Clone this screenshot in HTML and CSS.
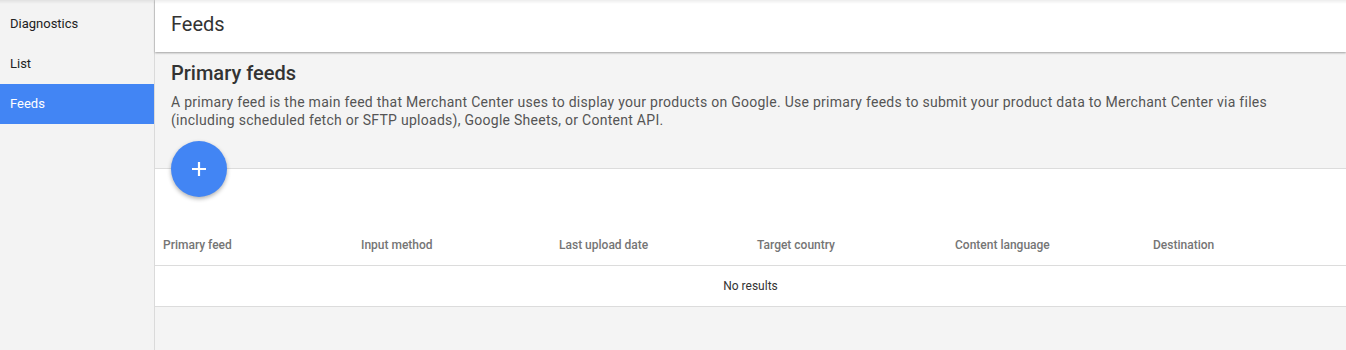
FILE: index.html
```html
<!DOCTYPE html>
<html lang="en">
<head>
    <meta charset="UTF-8">
    <title>Feeds</title>
    <link rel="stylesheet" href="styles.css">
</head>
<body>
    <div class="layout">
        <div class="sidebar">
            <div class="nav-item">Diagnostics</div>
            <div class="nav-item">List</div>
            <div class="nav-item active">Feeds</div>
        </div>

        <div class="main">
            <div class="header">Feeds</div>

            <div class="intro">
                <h2>Primary feeds</h2>
                <p>A primary feed is the main feed that Merchant Center uses to display your products on Google. Use primary feeds to submit your product data to Merchant Center via files (including scheduled fetch or SFTP uploads), Google Sheets, or Content API.</p>
                <button class="fab">
                    <svg width="18" height="18" viewBox="0 0 18 18"><path d="M9 2v14M2 9h14" stroke="#fff" stroke-width="2.2"/></svg>
                </button>
            </div>

            <div class="table-wrap">
                <table class="feeds">
                    <colgroup>
                        <col class="col">
                        <col class="col">
                        <col class="col">
                        <col class="col">
                        <col class="col">
                        <col>
                    </colgroup>
                    <thead>
                        <tr>
                            <th>Primary feed</th>
                            <th>Input method</th>
                            <th>Last upload date</th>
                            <th>Target country</th>
                            <th>Content language</th>
                            <th>Destination</th>
                        </tr>
                    </thead>
                    <tbody>
                        <tr>
                            <td colspan="6" class="empty">No results</td>
                        </tr>
                    </tbody>
                </table>
            </div>
        </div>
    </div>
</body>
</html>
```

FILE: styles.css
```css
html, body {
    height: 100%;
}
body {
    margin: 0;
    font-family: Roboto, "Liberation Sans", Arial, sans-serif;
    color: #222;
    background-color: #f4f4f4;
}
body::before {
    content: "";
    position: fixed;
    top: 0;
    left: 0;
    right: 0;
    height: 4px;
    background: linear-gradient(rgba(0, 0, 0, 0.07), rgba(0, 0, 0, 0));
    z-index: 5;
}
.layout {
    display: flex;
    height: 100%;
}
.sidebar {
    width: 154px;
    flex-shrink: 0;
    background-color: #f3f3f3;
    border-right: 1px solid #dadada;
    padding-top: 4px;
}
.nav-item {
    height: 40px;
    line-height: 40px;
    padding-left: 10px;
    font-size: 13px;
    color: #222;
}
.nav-item.active {
    background-color: #4285f4;
    color: #fff;
}
.main {
    flex: 1;
    background-color: #f4f4f4;
}
.header {
    height: 52px;
    line-height: 48px;
    padding-left: 16px;
    background-color: #fff;
    font-size: 20px;
    color: #333;
    box-shadow: 0 1px 2px rgba(0, 0, 0, 0.35);
    position: relative;
    z-index: 1;
}
.intro {
    padding: 9px 16px 0;
}
.intro h2 {
    margin: 0;
    font-size: 20px;
    font-weight: 500;
    line-height: 24px;
    color: #333;
}
.intro p {
    margin: 8px 0 0;
    font-size: 14px;
    line-height: 18px;
    letter-spacing: 0.27px;
    color: #555;
}
.fab {
    display: flex;
    align-items: center;
    justify-content: center;
    width: 56px;
    height: 56px;
    margin: 12px 0 -29px;
    padding: 0;
    border: none;
    border-radius: 50%;
    background-color: #4285f4;
    box-shadow: 0 2px 4px rgba(0, 0, 0, 0.3);
    position: relative;
    z-index: 2;
    cursor: pointer;
}
.table-wrap {
    background-color: #fff;
    border-top: 1px solid #dcdcdc;
    padding-top: 56px;
}
.feeds {
    width: 100%;
    border-collapse: collapse;
    table-layout: fixed;
}
.feeds .col {
    width: 198px;
}
.feeds th {
    height: 40px;
    padding: 0 0 0 8px;
    text-align: left;
    font-size: 12px;
    font-weight: 500;
    color: #757575;
    border-bottom: 1px solid #dcdcdc;
}
.feeds td {
    height: 40px;
    padding: 0;
    font-size: 12px;
    border-bottom: 1px solid #dcdcdc;
}
.feeds .empty {
    text-align: center;
    color: #333;
}
```
